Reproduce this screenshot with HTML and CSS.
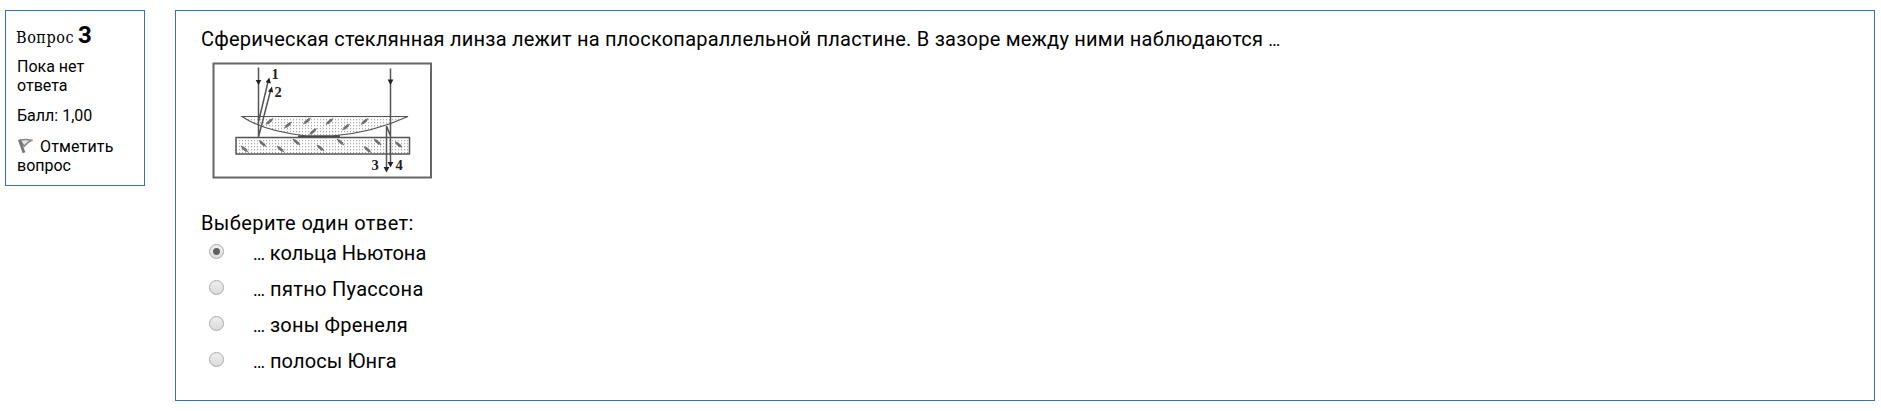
FILE: index.html
```html
<!DOCTYPE html>
<html lang="ru">
<head>
<meta charset="utf-8">
<title>Вопрос 3</title>
<link rel="stylesheet" href="styles.css">
</head>
<body>
<main class="question">
  <aside class="info">
    <h3 class="number"><span class="label">Вопрос</span><b class="digit">3</b></h3>
    <p class="state"><span class="state-a">Пока нет</span><br><span class="state-b">ответа</span></p>
    <p class="grade">Балл: 1,00</p>
    <p class="flag"><svg class="flag-icon" width="16" height="16" viewBox="0 0 16 16"><path d="M3 2.2Q9 .9 14.5 2.3Q10.5 4.2 7.2 8.2Z" fill="#e4e4e4" stroke="#8c8c8c" stroke-width="1.6"/><path d="M2.4 1.8L7 14.8" stroke="#777" stroke-width="2.8" fill="none"/></svg><span class="flag-a">Отметить</span><br><span class="flag-b">вопрос</span></p>
  </aside>
  <section class="content">
    <p class="prompt">Сферическая стеклянная линза лежит на плоскопараллельной пластине. В зазоре между ними наблюдаются <span class="dots">…</span></p>
    <svg class="diagram" width="220" height="117" viewBox="212 62 220 117">
      <defs>
        <pattern id="dots" x="239" y="119" width="3" height="3" patternUnits="userSpaceOnUse"><rect width="1.1" height="1.3" fill="#aaa"/></pattern>
        <g id="tick"><path d="M-3.6-3L3.6 3" stroke="#777" stroke-width="1.1"/><path d="M-1.7-2.9L3 .8L1.3 2.9L-3-.8Z" fill="#707070"/></g>
        <g id="rise"><path d="M-3.6 3L3.6-3" stroke="#777" stroke-width="1.1"/><path d="M-3 .8L1.7-2.9L3-.8L-1.3 2.9Z" fill="#707070"/></g>
      </defs>
      <rect x="213.5" y="63.5" width="217.5" height="114" fill="#fff" stroke="#666" stroke-width="2"/>
      <path d="M242 116.5H408Q372 133 332 136H306Q263 131 242 116.5Z" fill="url(#dots)" stroke="#555" stroke-width="1.2"/>
      <path d="M298 136.4H340" stroke="#444" stroke-width="1.7"/>
      <rect x="236" y="137.5" width="173.5" height="16.5" fill="url(#dots)" stroke="#555" stroke-width="1.5"/>
      <use href="#rise" x="269.5" y="121.5"/><use href="#rise" x="288" y="125"/><use href="#rise" x="307" y="121"/><use href="#rise" x="313" y="131.5"/><use href="#rise" x="329.5" y="121.5"/><use href="#rise" x="346" y="127"/><use href="#rise" x="364.5" y="121.5"/>
      <use href="#tick" x="244.5" y="149"/><use href="#tick" x="262.5" y="143.5"/><use href="#tick" x="280.5" y="149"/><use href="#tick" x="296.5" y="142"/><use href="#tick" x="320.5" y="148"/><use href="#tick" x="340.5" y="142"/><use href="#tick" x="367.5" y="149.5"/><use href="#tick" x="377.5" y="142"/><use href="#tick" x="398.5" y="144.5"/>
      <g fill="none" stroke="#555" stroke-width="1.5">
        <path d="M258.5 67.5V137M258.5 122L268.2 81M258.5 137L270.7 90"/>
        <path d="M390.5 68.5V164M386.5 126V169M386.5 126L390.5 136"/>
      </g>
      <g fill="#222">
        <path d="M255.7 80H261.3L258.5 85Z"/><path d="M269.4 77.5L270.8 83.5L265.6 82.3Z"/><path d="M271.9 86.5L273.2 92.6L268 91.5Z"/>
        <path d="M387.6 79.5H393.4L390.5 85Z"/><path d="M387.6 162H393.4L390.5 167.5Z"/><path d="M383.6 167H389.4L386.5 172.5Z"/>
      </g>
      <g class="ray-labels"><text x="271.6" y="79">1</text><text x="274.5" y="97">2</text><text x="371.5" y="169.5">3</text><text x="395.5" y="169.5">4</text></g>
    </svg>
    <div class="ask">Выберите один ответ:</div>
    <div class="answers">
      <label class="answer"><input class="radio" type="radio" name="a" checked><span class="text t1"><span class="dots">…</span> кольца Ньютона</span></label>
      <label class="answer"><input class="radio" type="radio" name="a"><span class="text t2"><span class="dots">…</span> пятно Пуассона</span></label>
      <label class="answer"><input class="radio" type="radio" name="a"><span class="text t3"><span class="dots">…</span> зоны Френеля</span></label>
      <label class="answer"><input class="radio" type="radio" name="a"><span class="text t4"><span class="dots">…</span> полосы Юнга</span></label>
    </div>
  </section>
</main>
</body>
</html>
```
FILE: styles.css
```css
* { box-sizing: border-box; }
body { margin: 0; background: #fff; color: #000; font-family: Roboto, sans-serif; }
p, h3 { margin: 0; }
.question { display: flex; align-items: flex-start; gap: 30px; padding: 10px 6px 0 5px; }
.info { width: 140px; height: 176px; border: 1px solid #3a6ebc; padding: 11px 0 0 11px; font-size: 16px; line-height: 19px; white-space: nowrap; }
.number { display: flex; align-items: baseline; gap: 4px; height: 35px; line-height: 27px; font-weight: 400; }
.label { font-family: "DejaVu Serif Condensed", "DejaVu Serif", serif; font-stretch: condensed; font-size: 16px; letter-spacing: .55px; margin-left: -1px; }
.digit { font-size: 24px; }
.state { height: 49px; }
.grade { height: 31px; }
.flag-a { letter-spacing: .15px; }
.flag-icon { width: 16px; height: 16px; margin-right: 7px; vertical-align: -2px; }
.content { flex: 1; height: 391px; border: 1px solid #3a6ebc; padding: 15px 0 0 25px; font-size: 20px; line-height: 26px; white-space: nowrap; }
.prompt { height: 36px; letter-spacing: .23px; }
.dots { font-size: 18px; letter-spacing: -.2px; line-height: 1; }
.diagram { display: block; margin-left: 11px; }
.ray-labels { font: bold 14.5px "Liberation Serif", serif; fill: #222; }
.ask { margin-top: 31px; height: 23px; letter-spacing: .4px; }
.answers { padding-left: 8px; }
.answer { display: flex; align-items: center; gap: 29px; height: 36px; }
.text { padding-top: 3px; }
.t1 { letter-spacing: 0; }
.t2 { letter-spacing: .3px; }
.t3 { letter-spacing: .2px; }
.t4 { letter-spacing: .12px; }
.radio { appearance: none; flex: none; width: 15px; height: 15px; margin: 0; border: 1px solid #aaa; border-radius: 50%; background: linear-gradient(#eee, #dadada); }
.radio:checked { background: radial-gradient(circle, #606060 0 3px, transparent 4px), linear-gradient(#f0f0f0, #dedede); }
```
